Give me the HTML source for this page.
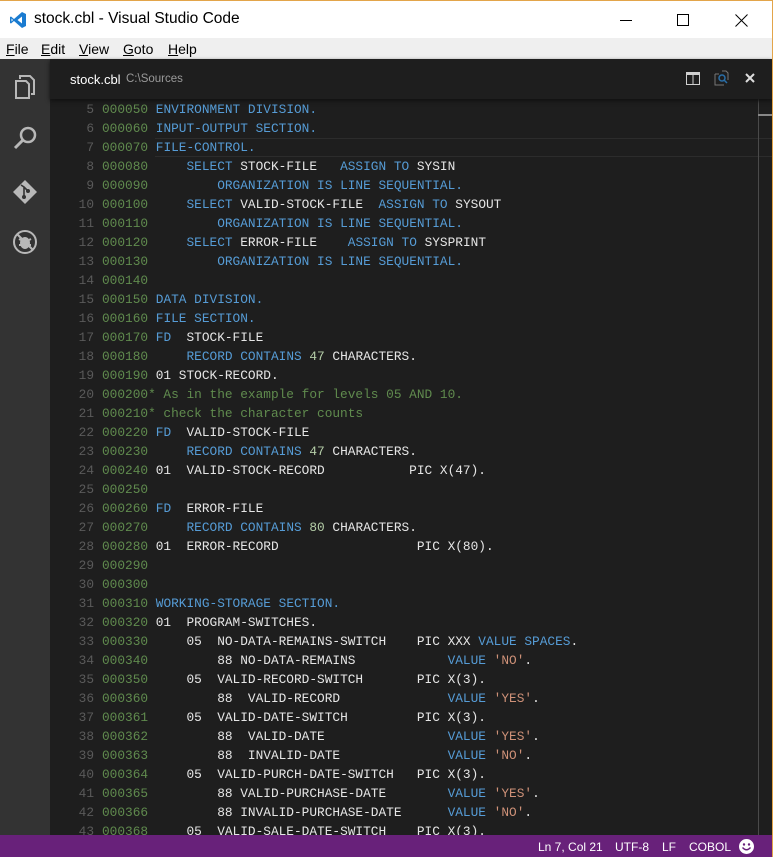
<!DOCTYPE html>
<html><head><meta charset="utf-8"><style>
*{margin:0;padding:0;box-sizing:border-box}
body{width:777px;height:857px;background:#fff;position:relative;overflow:hidden;font-family:"Liberation Sans",sans-serif}
#win{position:absolute;left:0;top:0;width:773px;height:857px;border-top:1px solid #e3a54a;border-right:1px solid #e3a54a;overflow:hidden}
#title{position:absolute;left:0;top:0;width:772px;height:37px;background:#fff}
#title .t{position:absolute;left:34px;top:9px;font-size:15.5px;color:#000}
#menu{position:absolute;left:0;top:37px;width:772px;height:21px;background:#efefef;font-size:14px;color:#000}
#menu span{position:absolute;top:3px}
#act{position:absolute;left:0;top:58px;width:50px;height:776px;background:#333}
#ed{position:absolute;left:50px;top:58px;width:722px;height:776px;background:#1e1e1e}
#tabs{position:absolute;left:0;top:0;width:722px;height:40px;background:#1e1e1e;box-shadow:0 2px 4px #111;z-index:2}
#code{position:absolute;left:0;top:-1px;width:722px;height:777px;overflow:hidden}
.l{position:absolute;left:0;height:19px;line-height:19px;font-family:"Liberation Mono",monospace;font-size:12.8px;white-space:pre;color:#e6e6e6}
.n{display:inline-block;width:44px;text-align:right;color:#5a5a5a;margin-right:8px}
.s{color:#608b4e}.k{color:#569cd6}.c{color:#608b4e}.d{color:#b5cea8}.q{color:#ce9178}
#status{position:absolute;left:0;top:834px;width:772px;height:23px;background:#68217a;color:#fff;font-size:12px}
#status span{position:absolute;top:5px}
</style></head><body><div id="win">
<div id="title">
<svg style="position:absolute;left:9px;top:10px" width="18" height="18" viewBox="0 0 18 18"><path d="M13 1 L17 3 V15 L13 17 L5 10 L2 12.5 L1 12 V6 L2 5.5 L5 8 Z M13 5.5 L8.5 9 L13 12.5 Z M2.5 7.5 V10.5 L4 9 Z" fill="#1a7bd0" fill-rule="evenodd"/></svg>
<span class="t">stock.cbl - Visual Studio Code</span>
<div style="position:absolute;left:620px;top:19px;width:12px;height:1px;background:#000"></div>
<div style="position:absolute;left:677px;top:13px;width:12px;height:12px;border:1px solid #000"></div>
<svg style="position:absolute;left:735px;top:13px" width="13" height="13"><path d="M0.5 0.5 L12.5 12.5 M12.5 0.5 L0.5 12.5" stroke="#000" stroke-width="1"/></svg>
</div>
<div id="menu"><span style="left:6px"><u>F</u>ile</span><span style="left:41px"><u>E</u>dit</span><span style="left:79px"><u>V</u>iew</span><span style="left:123px"><u>G</u>oto</span><span style="left:168px"><u>H</u>elp</span></div>
<div id="act">
<svg style="position:absolute;left:14px;top:15px" width="22" height="26" viewBox="0 0 22 26" fill="none" stroke="#b8b8b8" stroke-width="2"><path d="M2 7 H12 L15 10 V24 H2 Z"/><path d="M6 5 V2 H16 L20 6 V20 H17"/></svg>
<svg style="position:absolute;left:12px;top:66px" width="26" height="26" viewBox="0 0 26 26" fill="none" stroke="#b8b8b8" stroke-width="2.5"><circle cx="16" cy="10" r="7"/><path d="M11 15 L3 23" stroke-width="3"/></svg>
<svg style="position:absolute;left:12px;top:120px" width="26" height="26" viewBox="0 0 26 26"><path d="M13 1 L25 13 L13 25 L1 13 Z" fill="#b8b8b8"/><circle cx="12" cy="18" r="2" fill="#333"/><circle cx="16" cy="12" r="2" fill="#333"/><path d="M12 8 V18 M9 6 L12 8 L16 12" stroke="#333" stroke-width="1.6" fill="none"/></svg>
<svg style="position:absolute;left:12px;top:170px" width="26" height="26" viewBox="0 0 26 26" fill="none" stroke="#b8b8b8" stroke-width="2"><circle cx="13" cy="13" r="11"/><path d="M5 5 L21 21"/><ellipse cx="13" cy="14" rx="4" ry="5" fill="#b8b8b8"/><path d="M7 10 L9 11 M19 10 L17 11 M7 16 H9 M17 16 H19"/></svg>
</div>
<div id="ed">
<div id="tabs">
<span style="position:absolute;left:20px;top:13px;font-size:13px;color:#fff">stock.cbl</span>
<span style="position:absolute;left:76px;top:14px;font-size:11.5px;color:#9a9a9a">C:\Sources</span>
<svg style="position:absolute;left:636px;top:13px" width="14" height="13"><rect x="0.5" y="0.5" width="13" height="12" fill="none" stroke="#d0d0d0"/><rect x="0" y="0" width="14" height="3" fill="#d0d0d0"/><path d="M7 0 V13" stroke="#d0d0d0"/></svg>
<svg style="position:absolute;left:664px;top:11px" width="16" height="16"><path d="M1 4 H5 M1 4 V15 H10 M8 1 H12 L14 3 V10" stroke="#777" fill="none"/><circle cx="8" cy="8" r="3" stroke="#2a6fa8" stroke-width="1.5" fill="none"/><path d="M10 10 L13 13" stroke="#2a6fa8" stroke-width="1.5"/></svg>
<svg style="position:absolute;left:695px;top:14px" width="10" height="10"><path d="M1 1 L9 9 M9 1 L1 9" stroke="#ddd" stroke-width="2"/></svg>
</div>
<div id="code">
<div style="position:absolute;left:105px;top:80px;width:617px;height:19px;border-top:1px solid #2c2c2c;border-bottom:1px solid #2c2c2c"></div>
<div style="position:absolute;left:708px;top:40px;width:1px;height:737px;background:#4a4a4a"></div>
<div style="position:absolute;left:708px;top:56px;width:14px;height:2px;background:#888"></div>
<div class="l" style="top:23px"><span class="n">4</span><span class="s">000040</span></div>
<div class="l" style="top:42px"><span class="n">5</span><span class="s">000050</span> <span class="k">ENVIRONMENT DIVISION.</span></div>
<div class="l" style="top:61px"><span class="n">6</span><span class="s">000060</span> <span class="k">INPUT-OUTPUT SECTION.</span></div>
<div class="l" style="top:80px"><span class="n">7</span><span class="s">000070</span> <span class="k">FILE-CONTROL.</span></div>
<div class="l" style="top:99px"><span class="n">8</span><span class="s">000080</span>     <span class="k">SELECT</span> STOCK-FILE   <span class="k">ASSIGN TO</span> SYSIN</div>
<div class="l" style="top:118px"><span class="n">9</span><span class="s">000090</span>         <span class="k">ORGANIZATION IS LINE SEQUENTIAL.</span></div>
<div class="l" style="top:137px"><span class="n">10</span><span class="s">000100</span>     <span class="k">SELECT</span> VALID-STOCK-FILE  <span class="k">ASSIGN TO</span> SYSOUT</div>
<div class="l" style="top:156px"><span class="n">11</span><span class="s">000110</span>         <span class="k">ORGANIZATION IS LINE SEQUENTIAL.</span></div>
<div class="l" style="top:175px"><span class="n">12</span><span class="s">000120</span>     <span class="k">SELECT</span> ERROR-FILE    <span class="k">ASSIGN TO</span> SYSPRINT</div>
<div class="l" style="top:194px"><span class="n">13</span><span class="s">000130</span>         <span class="k">ORGANIZATION IS LINE SEQUENTIAL.</span></div>
<div class="l" style="top:213px"><span class="n">14</span><span class="s">000140</span></div>
<div class="l" style="top:232px"><span class="n">15</span><span class="s">000150</span> <span class="k">DATA DIVISION.</span></div>
<div class="l" style="top:251px"><span class="n">16</span><span class="s">000160</span> <span class="k">FILE SECTION.</span></div>
<div class="l" style="top:270px"><span class="n">17</span><span class="s">000170</span> <span class="k">FD</span>  STOCK-FILE</div>
<div class="l" style="top:289px"><span class="n">18</span><span class="s">000180</span>     <span class="k">RECORD CONTAINS</span> <span class="d">47</span> CHARACTERS.</div>
<div class="l" style="top:308px"><span class="n">19</span><span class="s">000190</span> 01 STOCK-RECORD.</div>
<div class="l" style="top:327px"><span class="n">20</span><span class="c">000200* As in the example for levels 05 AND 10.</span></div>
<div class="l" style="top:346px"><span class="n">21</span><span class="c">000210* check the character counts</span></div>
<div class="l" style="top:365px"><span class="n">22</span><span class="s">000220</span> <span class="k">FD</span>  VALID-STOCK-FILE</div>
<div class="l" style="top:384px"><span class="n">23</span><span class="s">000230</span>     <span class="k">RECORD CONTAINS</span> <span class="d">47</span> CHARACTERS.</div>
<div class="l" style="top:403px"><span class="n">24</span><span class="s">000240</span> 01  VALID-STOCK-RECORD           PIC X(47).</div>
<div class="l" style="top:422px"><span class="n">25</span><span class="s">000250</span></div>
<div class="l" style="top:441px"><span class="n">26</span><span class="s">000260</span> <span class="k">FD</span>  ERROR-FILE</div>
<div class="l" style="top:460px"><span class="n">27</span><span class="s">000270</span>     <span class="k">RECORD CONTAINS</span> <span class="d">80</span> CHARACTERS.</div>
<div class="l" style="top:479px"><span class="n">28</span><span class="s">000280</span> 01  ERROR-RECORD                  PIC X(80).</div>
<div class="l" style="top:498px"><span class="n">29</span><span class="s">000290</span></div>
<div class="l" style="top:517px"><span class="n">30</span><span class="s">000300</span></div>
<div class="l" style="top:536px"><span class="n">31</span><span class="s">000310</span> <span class="k">WORKING-STORAGE SECTION.</span></div>
<div class="l" style="top:555px"><span class="n">32</span><span class="s">000320</span> 01  PROGRAM-SWITCHES.</div>
<div class="l" style="top:574px"><span class="n">33</span><span class="s">000330</span>     05  NO-DATA-REMAINS-SWITCH    PIC XXX <span class="k">VALUE SPACES</span>.</div>
<div class="l" style="top:593px"><span class="n">34</span><span class="s">000340</span>         88 NO-DATA-REMAINS            <span class="k">VALUE</span> <span class="q">'NO'</span>.</div>
<div class="l" style="top:612px"><span class="n">35</span><span class="s">000350</span>     05  VALID-RECORD-SWITCH       PIC X(3).</div>
<div class="l" style="top:631px"><span class="n">36</span><span class="s">000360</span>         88  VALID-RECORD              <span class="k">VALUE</span> <span class="q">'YES'</span>.</div>
<div class="l" style="top:650px"><span class="n">37</span><span class="s">000361</span>     05  VALID-DATE-SWITCH         PIC X(3).</div>
<div class="l" style="top:669px"><span class="n">38</span><span class="s">000362</span>         88  VALID-DATE                <span class="k">VALUE</span> <span class="q">'YES'</span>.</div>
<div class="l" style="top:688px"><span class="n">39</span><span class="s">000363</span>         88  INVALID-DATE              <span class="k">VALUE</span> <span class="q">'NO'</span>.</div>
<div class="l" style="top:707px"><span class="n">40</span><span class="s">000364</span>     05  VALID-PURCH-DATE-SWITCH   PIC X(3).</div>
<div class="l" style="top:726px"><span class="n">41</span><span class="s">000365</span>         88 VALID-PURCHASE-DATE        <span class="k">VALUE</span> <span class="q">'YES'</span>.</div>
<div class="l" style="top:745px"><span class="n">42</span><span class="s">000366</span>         88 INVALID-PURCHASE-DATE      <span class="k">VALUE</span> <span class="q">'NO'</span>.</div>
<div class="l" style="top:764px"><span class="n">43</span><span class="s">000368</span>     05  VALID-SALE-DATE-SWITCH    PIC X(3).</div>
</div>
</div>
<div id="status"><span style="left:538px">Ln 7, Col 21</span><span style="left:615px">UTF-8</span><span style="left:662px">LF</span><span style="left:689px">COBOL</span>
<svg style="position:absolute;left:739px;top:4px" width="15" height="15"><circle cx="7.5" cy="7.5" r="7.5" fill="#fff"/><circle cx="5" cy="5.5" r="1.2" fill="#68217a"/><circle cx="10" cy="5.5" r="1.2" fill="#68217a"/><path d="M3.5 8.5 Q7.5 13 11.5 8.5" stroke="#68217a" stroke-width="1.4" fill="none"/></svg></div>
</div></body></html>
